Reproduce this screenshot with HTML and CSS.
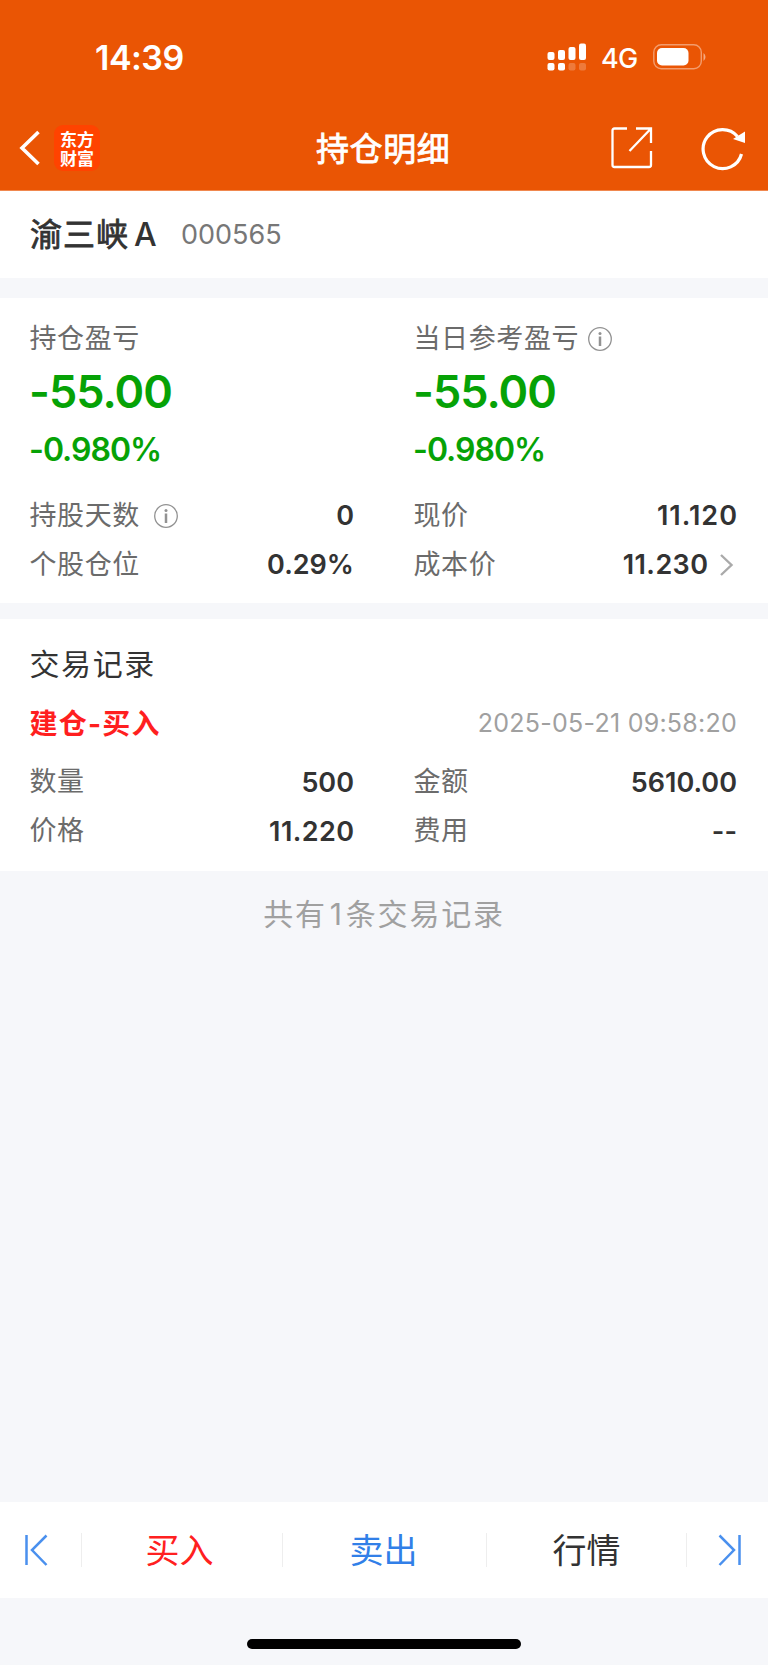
FILE: index.html
```html
<!DOCTYPE html>
<html lang="zh-CN">
<head>
<meta charset="utf-8">
<title>持仓明细</title>
<link rel="stylesheet" href="styles.css">
</head>
<body>
<header class="header">
  <div class="status">
    <span class="time">14:39</span>
    <svg class="signal" width="40" height="28" viewBox="0 0 40 28" fill="#fff">
      <rect x="0.5" y="9" width="7" height="8" rx="2"/><rect x="11" y="7" width="7" height="10" rx="2"/><rect x="21.5" y="4" width="7" height="13" rx="2"/><rect x="32" y="0.5" width="7" height="16.5" rx="2"/>
      <rect x="0.5" y="20" width="7" height="7.500" rx="2"/><rect x="11" y="20" width="7" height="7.500" rx="2"/><rect x="21.500" y="20" width="7" height="7.500" rx="2" opacity=".22"/><rect x="32" y="20" width="7" height="7.500" rx="2" opacity=".22"/>
    </svg>
    <span class="net">4G</span>
    <svg class="battery" width="54" height="26" viewBox="0 0 54 26">
      <rect x="0.8" y="0.8" width="47.500" height="24" rx="7.500" fill="none" stroke="#fff" stroke-width="1.400" opacity=".42"/>
      <rect x="4" y="4" width="31.500" height="17.500" rx="5" fill="#fff"/>
      <path d="M50.500 9v8q2-1.500 2-4t-2-4z" fill="#fff" opacity=".5"/>
    </svg>
  </div>
  <nav class="nav">
    <svg class="back" width="22" height="36" viewBox="0 0 22 36" fill="none" stroke="#fff" stroke-width="3.600"><path d="M19.500 2L3 18l16.500 16"/></svg>
    <div class="logo"><span class="logo-text">东方财富</span></div>
    <h1 class="title">持仓明细</h1>
    <svg class="share" width="44" height="44" viewBox="0 0 44 44" fill="none" stroke="#fff" stroke-width="2.300"><path d="M17 2.500H4.500Q2.500 2.500 2.500 4.500V39Q2.500 41 4.500 41H39Q41 41 41 39V25M26 2.500h15V17M41 2.500L19.500 25"/></svg>
    <svg class="refresh" width="46" height="46" viewBox="0 0 46 46"><path d="M36.500 11.500A19.500 19.500 0 1 0 40.500 29" fill="none" stroke="#fff" stroke-width="3.200"/><path d="M44 6.500V18L32 14z" fill="#fff"/></svg>
  </nav>
</header>

<section class="stock"><span class="name">渝三峡<i class="mark">A</i></span><span class="code">000565</span></section>

<section class="summary">
  <div class="col">
    <div class="label top">持仓盈亏</div>
    <div class="big">-55.00</div>
    <div class="pct">-0.980%</div>
    <div class="row first"><span class="label">持股天数</span><svg class="info far" width="26" height="26" viewBox="0 0 26 26"><circle cx="13" cy="13" r="11.300" fill="none" stroke="#929292" stroke-width="1.300"/><circle cx="13" cy="7.500" r="1.500" fill="#929292"/><path d="M13 10.500V20" stroke="#929292" stroke-width="2.500"/></svg><span class="val">0</span></div>
    <div class="row"><span class="label">个股仓位</span><span class="val">0.29%</span></div>
  </div>
  <div class="col">
    <div class="label top">当日参考盈亏<svg class="info" width="26" height="26" viewBox="0 0 26 26"><circle cx="13" cy="13" r="11.300" fill="none" stroke="#929292" stroke-width="1.300"/><circle cx="13" cy="7.500" r="1.500" fill="#929292"/><path d="M13 10.500V20" stroke="#929292" stroke-width="2.500"/></svg></div>
    <div class="big">-55.00</div>
    <div class="pct">-0.980%</div>
    <div class="row first"><span class="label">现价</span><span class="val wide">11.120</span></div>
    <div class="row"><span class="label">成本价</span><span class="val narrow">11.230</span><svg class="more" width="14" height="24" viewBox="0 0 14 24" fill="none" stroke="#aaa" stroke-width="2.400"><path d="M1 2l10.500 10L1 22"/></svg></div>
  </div>
</section>

<section class="records">
  <h2 class="heading">交易记录</h2>
  <div class="record-head"><span class="kind">建仓-买入</span><time class="date">2025-05-21 09:58:20</time></div>
  <div class="cols">
    <div class="col">
      <div class="row"><span class="label">数量</span><span class="val">500</span></div>
      <div class="row"><span class="label">价格</span><span class="val narrow">11.220</span></div>
    </div>
    <div class="col">
      <div class="row"><span class="label">金额</span><span class="val">5610.00</span></div>
      <div class="row"><span class="label">费用</span><span class="val">--</span></div>
    </div>
  </div>
</section>

<main class="rest">共有<span class="count">1</span>条交易记录</main>

<footer class="tabs">
  <a class="edge"><svg width="24" height="32" viewBox="0 0 24 32" fill="none" stroke="#4a90ee" stroke-width="2.500"><path d="M2.500 1v30M22.500 1.500L8 16l14.500 15"/></svg></a>
  <a class="tab buy">买入</a>
  <a class="tab sell">卖出</a>
  <a class="tab quote">行情</a>
  <a class="edge last"><svg width="24" height="32" viewBox="0 0 24 32" fill="none" stroke="#4a90ee" stroke-width="2.500"><path d="M21.500 1v30M1.500 1.500L16 16 1.500 31"/></svg></a>
</footer>
<div class="home"><span class="bar"></span></div>
</body>
</html>
```

FILE: styles.css
```css
* { box-sizing: border-box; }
body {
  margin: 0;
  height: 1665px;
  display: flex;
  flex-direction: column;
  background: #f6f7fa;
  color: #333;
  font-family: Inter, "Noto Sans CJK SC", sans-serif;
}
svg { display: block; flex: none; }
h1, h2 { margin: 0; }

.header { height: 191px; background: #ea5504; color: #fff; border-bottom: 1px solid #f0884f; }
.status { display: flex; align-items: center; height: 114px; padding-left: 95px; }
.time { width: 452px; padding-top: 2px; font-size: 34px; font-weight: 600; line-height: 40px; letter-spacing: -.5px; }
.net { width: 52px; margin-right: 14px; padding: 2px 0 0 14px; font-size: 27px; font-weight: 500; letter-spacing: -.8px; }
.nav { display: flex; align-items: center; height: 68px; }
.back { margin-left: 19px; }
.logo {
  display: flex; align-items: center; justify-content: center;
  width: 46px; height: 46px; margin-left: 13px; margin-right: 1px; border-radius: 9px;
  background: #ff4300;
}
.logo-text {
  width: 36px; padding-bottom: 1px; text-align: center;
  font-family: "Noto Sans CJK SC", sans-serif; font-size: 17px; font-weight: 700; line-height: 19px;
}
.title { margin-left: 215px; padding-top: 1px; width: 294px; font-size: 33px; font-weight: 400; line-height: 48px; letter-spacing: .6px; -webkit-text-stroke: .8px; }
.refresh { margin-left: 47px; }

.stock { display: flex; align-items: center; height: 87px; padding-left: 30px; background: #fff; }
.name { width: 151px; padding-bottom: 6px; font-size: 32px; font-weight: 400; letter-spacing: 1px; -webkit-text-stroke: .8px; }
.mark { margin-left: 5px; font-style: normal; font-weight: 500; -webkit-text-stroke: 0; }
.code { font-size: 27px; color: #777; }

.summary { display: grid; grid-template-columns: 324px 323px; gap: 60px; height: 305px; margin-top: 20px; padding: 17px 0 0 30px; background: #fff; }
.label { margin-left: -.5px; font-size: 27px; line-height: 44px; letter-spacing: .6px; color: #6b6b6b; font-weight: 400; }
.label.top { display: flex; align-items: center; padding-top: 3px; height: 44px; }
.info { margin-left: 8px; }
.info.far { margin-left: 13px; }
.big { height: 64px; margin-left: -1px; font-size: 45px; font-weight: 600; line-height: 66px; letter-spacing: -1px; color: #06a206; }
.pct { height: 50px; margin-left: -1px; font-size: 32px; font-weight: 600; line-height: 53px; letter-spacing: -1px; color: #06a206; }
.row { display: flex; align-items: center; height: 49px; }
.row.first { margin-top: 18px; }
.val { margin-left: auto; font-size: 27px; font-weight: 600; color: #333; }
.wide { letter-spacing: 1px; margin-right: -1px; }
.narrow { letter-spacing: .4px; margin-right: -.4px; }
.more { margin-left: 12px; margin-right: 3px; }

.records { height: 252px; margin-top: 16px; padding: 21px 0 0 30px; background: #fff; }
.heading { margin-left: -.5px; font-size: 30px; font-weight: 400; line-height: 48px; letter-spacing: 1.6px; }
.record-head { display: flex; align-items: center; justify-content: space-between; width: 707px; height: 70px; }
.kind { padding-bottom: 3px; margin-left: -.5px; font-size: 28px; font-weight: 700; letter-spacing: 1.2px; color: #ff1f1f; }
.date { font-size: 25px; letter-spacing: .25px; color: #a0a0a0; }
.records .row { position: relative; top: -.5px; }
.cols { display: grid; grid-template-columns: 324px 323px; gap: 60px; }

.rest { flex: 1; padding-top: 19px; text-align: center; font-size: 30px; line-height: 48px; letter-spacing: 1.8px; color: #a0a0a0; }
.count { margin: 0 2px 0 3px; }

.tabs { display: flex; align-items: center; height: 96px; background: #fff; }
.edge { display: flex; align-items: center; width: 81px; height: 34px; padding-left: 24px; }
.edge.last { width: 82px; padding-left: 31px; border-left: 1px solid #eee; }
.tab { flex: none; height: 34px; border-left: 1px solid #eee; font-size: 34px; line-height: 35px; text-align: center; }
.buy { width: 201px; padding-right: 5px; color: #ff2020; }
.sell { width: 204px; padding-right: 2px; color: #317fe8; }
.quote { width: 200px; }
.home { display: flex; justify-content: center; height: 67px; padding-top: 41px; }
.bar { width: 274px; height: 10px; border-radius: 5px; background: #000; }
```
